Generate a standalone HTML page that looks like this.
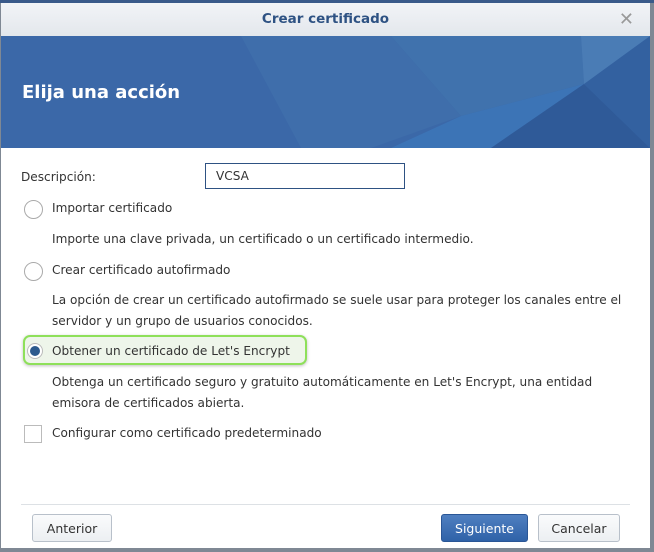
<!DOCTYPE html>
<html><head><meta charset="utf-8"><style>
body{margin:0;width:654px;height:552px;background:#7f8894;position:relative;overflow:hidden;font-family:"DejaVu Sans","Liberation Sans",sans-serif;}
.dlg{position:absolute;left:1px;top:3px;width:649px;height:545px;background:#fff;}
.top{position:absolute;left:0;top:0;width:654px;height:3px;background:#3a5a8a;}
.tb{position:absolute;left:0;top:0;width:649px;height:33px;background:linear-gradient(#f2f4f7,#e3e7ec);text-align:center;line-height:33px;color:#2e5283;font-weight:bold;font-size:13.5px;}
.x{position:absolute;right:16px;top:0;color:#999;font-weight:normal;font-size:18px;}
.ban{position:absolute;left:0;top:33px;width:649px;height:112px;background:#3b68a8;overflow:hidden;}
.ban h1{position:absolute;left:21px;top:46px;margin:0;color:#fff;font-size:18px;font-weight:bold;}
.t{position:absolute;font-size:12.1px;color:#333;white-space:nowrap;}
.r{position:absolute;left:23px;width:17px;height:17px;border:1px solid #aaa;border-radius:50%;background:#fff;}
.btn{position:absolute;top:511px;height:28px;border:1px solid #b8c0ca;border-radius:3px;background:linear-gradient(#fafbfc,#eceff2);font-size:12.5px;color:#333;text-align:center;line-height:28px;box-sizing:border-box;}
</style></head><body>
<div class="top"></div>
<div class="dlg">
<div class="tb">Crear certificado<span class="x">✕</span></div>
<div class="ban">
<svg width="649" height="112" style="position:absolute;left:0;top:0">
<polygon points="240,0 390,0 460,80 370,112 300,112" fill="#3f6eab"/>
<polygon points="390,0 580,0 583,48 460,80" fill="#4072ad"/>
<polygon points="460,80 583,48 490,112 390,112" fill="#3c74b6"/>
<polygon points="583,48 649,112 490,112" fill="#2f5a98"/>
<polygon points="583,48 649,0 649,112" fill="#3361a0"/>
<polygon points="580,0 649,0 583,48" fill="#4a7cb5"/>
</svg>
<h1>Elija una acción</h1></div>
<div class="t" style="left:20px;top:167px">Descripción:</div>
<div style="position:absolute;left:204px;top:160px;width:200px;height:26px;border:1px solid #2e5283;box-sizing:border-box"><span class="t" style="left:10px;top:5px">VCSA</span></div>
<div class="r" style="top:197px"></div><div class="t" style="left:51px;top:198px">Importar certificado</div>
<div class="t" style="left:51px;top:229px">Importe una clave privada, un certificado o un certificado intermedio.</div>
<div class="r" style="top:259px"></div><div class="t" style="left:51px;top:260px">Crear certificado autofirmado</div>
<div class="t" style="left:51px;top:290px">La opción de crear un certificado autofirmado se suele usar para proteger los canales entre el</div>
<div class="t" style="left:51px;top:311px">servidor y un grupo de usuarios conocidos.</div>
<div style="position:absolute;left:22px;top:332px;width:284px;height:30px;border:2px solid #8ee05a;border-radius:7px;background:#eef5ea;box-shadow:0 1px 3px rgba(0,0,0,.25);box-sizing:border-box"></div>
<div class="r" style="top:340px;left:26px;width:14px;height:14px;border-color:#bbb"><div style="position:absolute;left:2px;top:2px;width:10px;height:10px;border-radius:50%;background:#2d5a8e"></div></div>
<div class="t" style="left:51px;top:341px">Obtener un certificado de Let's Encrypt</div>
<div class="t" style="left:51px;top:372px">Obtenga un certificado seguro y gratuito automáticamente en Let's Encrypt, una entidad</div>
<div class="t" style="left:51px;top:393px">emisora de certificados abierta.</div>
<div style="position:absolute;left:23px;top:422px;width:18px;height:18px;border:1px solid #bbb;box-sizing:border-box"></div>
<div class="t" style="left:51px;top:423px">Configurar como certificado predeterminado</div>
<div style="position:absolute;left:20px;top:501px;width:609px;height:1px;background:#dde1e5"></div>
<div class="btn" style="left:31px;width:80px">Anterior</div>
<div class="btn" style="left:440px;width:87px;background:linear-gradient(#4f7fc0,#2f62a8);border-color:#2a5696;color:#fff">Siguiente</div>
<div class="btn" style="left:537px;width:82px">Cancelar</div>
</div>
</body></html>
